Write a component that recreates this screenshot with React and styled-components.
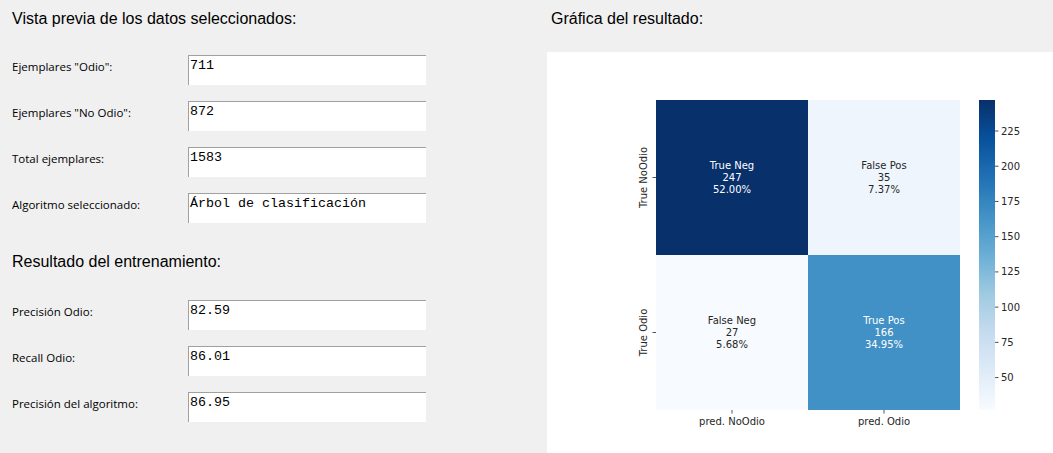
import styled, { createGlobalStyle } from "styled-components";

const GlobalStyle = createGlobalStyle`
  html, body {
    margin: 0;
    padding: 0;
    background: #f0f0f0;
  }
  #root {
    width: 1053px;
    height: 453px;
  }
`;

const previewRows = [
  { label: 'Ejemplares "Odio":', value: "711" },
  { label: 'Ejemplares "No Odio":', value: "872" },
  { label: "Total ejemplares:", value: "1583" },
  { label: "Algoritmo seleccionado:", value: "Árbol de clasificación" },
];

const resultRows = [
  { label: "Precisión Odio:", value: "82.59" },
  { label: "Recall Odio:", value: "86.01" },
  { label: "Precisión del algoritmo:", value: "86.95" },
];

// Blues colormap, bottom (low) to top (high)
const BLUES = [
  "#f7fbff",
  "#deebf7",
  "#c6dbef",
  "#9ecae1",
  "#6baed6",
  "#4292c6",
  "#2171b5",
  "#08519c",
  "#08306b",
];

const cells = [
  { name: "True Neg", n: 247, pct: "52.00%", fill: "#08306b", dark: true },
  { name: "False Pos", n: 35, pct: "7.37%", fill: "#eef5fc", dark: false },
  { name: "False Neg", n: 27, pct: "5.68%", fill: "#f7fbff", dark: false },
  { name: "True Pos", n: 166, pct: "34.95%", fill: "#4191c6", dark: true },
];

const VMIN = 27;
const VMAX = 247;
const MAP = { left: 109, top: 48, cw: 152, ch: 155 };
const BAR = { x: 432, w: 16, top: 48, h: 310 };

export default function App() {
  return (
    <>
      <GlobalStyle />
      <Window>
        <LeftPanel>
          <Title>Vista previa de los datos seleccionados:</Title>
          <FieldList $top={27}>
            {previewRows.map((r) => (
              <Field key={r.label}>
                <Label>{r.label}</Label>
                <ValueBox>{r.value}</ValueBox>
              </Field>
            ))}
          </FieldList>
          <Title $top={29}>Resultado del entrenamiento:</Title>
          <FieldList $top={29}>
            {resultRows.map((r) => (
              <Field key={r.label}>
                <Label>{r.label}</Label>
                <ValueBox>{r.value}</ValueBox>
              </Field>
            ))}
          </FieldList>
        </LeftPanel>
        <RightPanel>
          <ChartTitle>Gráfica del resultado:</ChartTitle>
          <Canvas>
            <ConfusionChart />
          </Canvas>
        </RightPanel>
      </Window>
    </>
  );
}

function ConfusionChart() {
  const ticks = [225, 200, 175, 150, 125, 100, 75, 50];
  const yOf = (v) => BAR.top + ((VMAX - v) * BAR.h) / (VMAX - VMIN);
  const rowCenters = [MAP.top + MAP.ch / 2, MAP.top + MAP.ch * 1.5];
  const colCenters = [MAP.left + MAP.cw / 2, MAP.left + MAP.cw * 1.5];

  return (
    <svg width="506" height="401" viewBox="0 0 506 401">
      <defs>
        <linearGradient id="blues" x1="0" y1="1" x2="0" y2="0">
          {BLUES.map((c, i) => (
            <stop key={c} offset={i / (BLUES.length - 1)} stopColor={c} />
          ))}
        </linearGradient>
      </defs>

      {cells.map((c, i) => {
        const col = i % 2;
        const row = Math.floor(i / 2);
        const x = MAP.left + col * MAP.cw;
        const y = MAP.top + row * MAP.ch;
        const cx = colCenters[col];
        const cy = rowCenters[row];
        const color = c.dark ? "#ffffff" : "#262626";
        return (
          <g key={c.name}>
            <rect x={x} y={y} width={MAP.cw} height={MAP.ch} fill={c.fill} />
            <ChartText x={cx} y={cy - 12} fill={color} textAnchor="middle" dominantBaseline="central">
              {c.name}
            </ChartText>
            <ChartText x={cx} y={cy} fill={color} textAnchor="middle" dominantBaseline="central">
              {c.n}
            </ChartText>
            <ChartText x={cx} y={cy + 12} fill={color} textAnchor="middle" dominantBaseline="central">
              {c.pct}
            </ChartText>
          </g>
        );
      })}

      {/* y axis */}
      {rowCenters.map((y, i) => (
        <g key={y}>
          <line x1={MAP.left - 3.5} x2={MAP.left} y1={y} y2={y} stroke="#262626" strokeWidth="0.8" />
          <ChartText
            x={96}
            y={y}
            fill="#262626"
            textAnchor="middle"
            dominantBaseline="central"
            transform={`rotate(-90 96 ${y})`}
          >
            {i === 0 ? "True NoOdio" : "True Odio"}
          </ChartText>
        </g>
      ))}

      {/* x axis */}
      {colCenters.map((x, i) => (
        <g key={x}>
          <line x1={x} x2={x} y1={MAP.top + MAP.ch * 2} y2={MAP.top + MAP.ch * 2 + 3.5} stroke="#262626" strokeWidth="0.8" />
          <ChartText x={x} y={369} fill="#262626" textAnchor="middle" dominantBaseline="central">
            {i === 0 ? "pred. NoOdio" : "pred. Odio"}
          </ChartText>
        </g>
      ))}

      {/* colorbar */}
      <rect x={BAR.x} y={BAR.top} width={BAR.w} height={BAR.h} fill="url(#blues)" />
      {ticks.map((t) => (
        <g key={t}>
          <line x1={BAR.x + BAR.w} x2={BAR.x + BAR.w + 3.5} y1={yOf(t)} y2={yOf(t)} stroke="#262626" strokeWidth="0.8" />
          <ChartText x={BAR.x + BAR.w + 6} y={yOf(t)} fill="#262626" dominantBaseline="central">
            {t}
          </ChartText>
        </g>
      ))}
    </svg>
  );
}

const Window = styled.main`
  display: flex;
  width: 1053px;
  height: 453px;
  background: #f0f0f0;
  overflow: hidden;
`;

const LeftPanel = styled.section`
  width: 547px;
  flex: none;
  padding: 10px 0 0 12px;
  box-sizing: border-box;
  display: flex;
  flex-direction: column;
`;

const Title = styled.h2`
  margin: ${(p) => p.$top || 0}px 0 0 0;
  font-family: "Liberation Sans", Arial, sans-serif;
  font-weight: normal;
  font-size: 16px;
  line-height: 18px;
  color: #000;
`;

const FieldList = styled.div`
  margin-top: ${(p) => p.$top}px;
  display: flex;
  flex-direction: column;
  gap: 15px;
`;

const Field = styled.div`
  display: flex;
  align-items: flex-start;
  height: 31px;
`;

const Label = styled.span`
  width: 176px;
  padding-top: 4px;
  font-family: "Open Sans", "Noto Sans", sans-serif;
  font-size: 11.5px;
  line-height: 16px;
  color: #000;
`;

const ValueBox = styled.div`
  width: 238px;
  height: 30px;
  background: #fff;
  border-top: 1px solid #a0a0a0;
  border-left: 1px solid #a0a0a0;
  padding: 3px 0 0 1px;
  box-sizing: border-box;
  font-family: "Liberation Mono", "Courier New", monospace;
  font-size: 13.33px;
  line-height: 14px;
  color: #000;
  white-space: pre;
`;

const RightPanel = styled.section`
  flex: 1;
  display: flex;
  flex-direction: column;
`;

const ChartTitle = styled.h2`
  margin: 0;
  padding: 10px 0 0 4px;
  height: 52px;
  box-sizing: border-box;
  font-family: "Liberation Sans", Arial, sans-serif;
  font-weight: normal;
  font-size: 16px;
  line-height: 18px;
  color: #000;
`;

const Canvas = styled.div`
  flex: 1;
  background: #fff;
  display: flex;
`;

const ChartText = styled.text`
  font-family: "DejaVu Sans", sans-serif;
  font-size: 10px;
`;
